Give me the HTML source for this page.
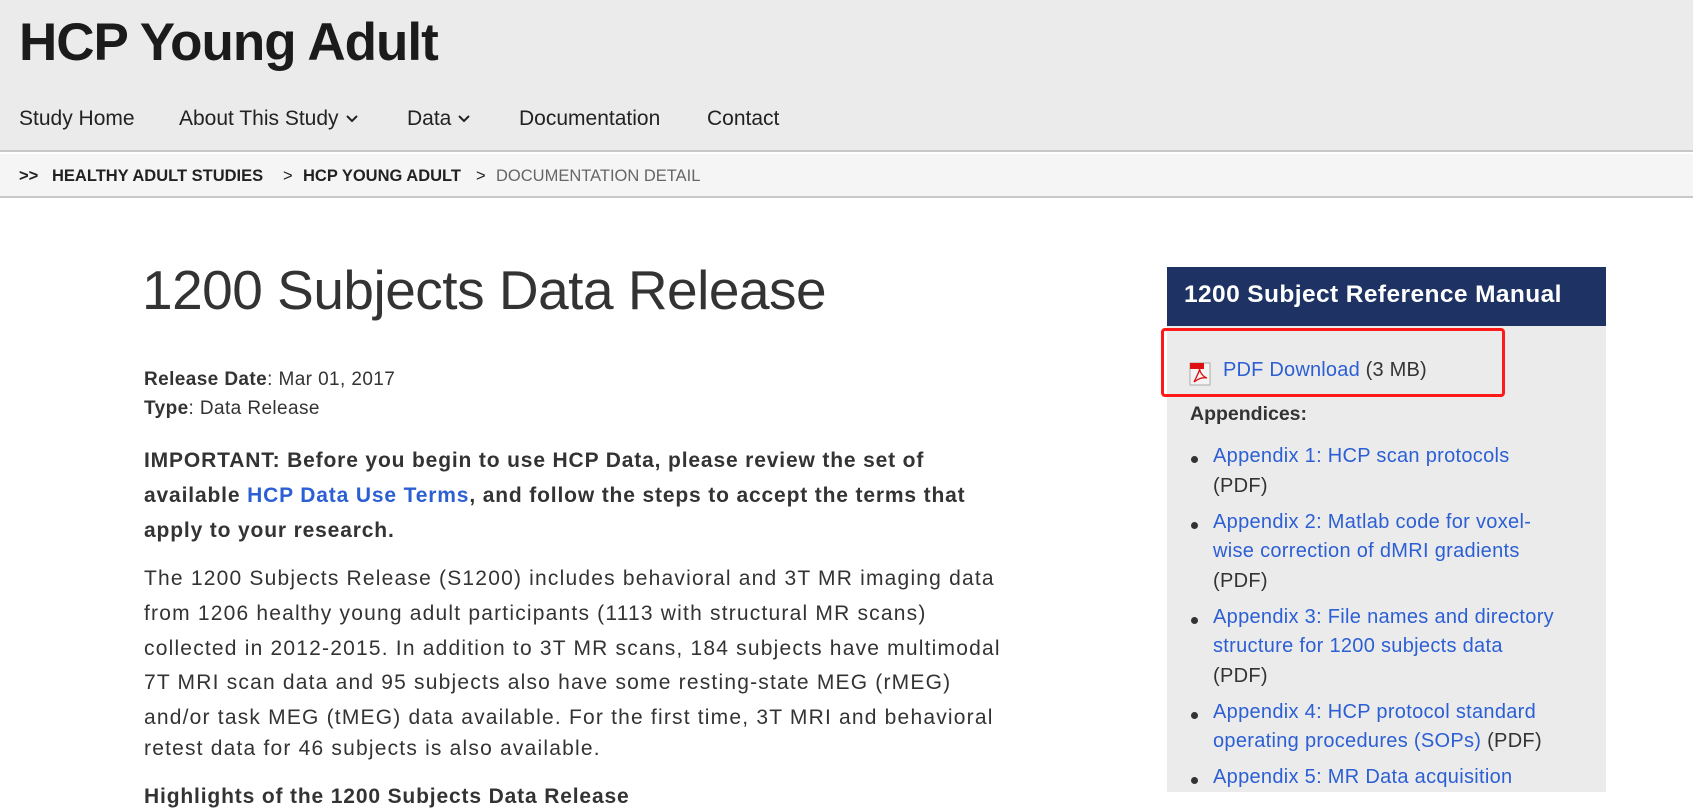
<!DOCTYPE html>
<html><head><meta charset="utf-8"><style>
*{margin:0;padding:0;box-sizing:border-box}
body{width:1693px;height:792px;overflow:hidden;background:#fff;font-family:"Liberation Sans",Arial,sans-serif;color:#333;position:relative}
.a{position:absolute;white-space:nowrap}
a{color:#2c5fd4;text-decoration:none}
.hdr{position:absolute;left:0;top:0;width:1693px;height:152px;background:#ebebeb;border-bottom:2px solid #c8c8c8}
.bc{position:absolute;left:0;top:154px;width:1693px;height:44px;background:#f5f5f5;border-bottom:2px solid #c8c8c8}
.nav{font-size:21px;color:#222}
.crumb{font-size:16.5px;font-weight:bold;color:#222;top:167px}
.p{font-size:21px;color:#333;letter-spacing:1.2px}
.b{font-size:21px;font-weight:bold;letter-spacing:0.85px;color:#333}
.side{position:absolute;left:1167px;top:267px;width:439px;height:525px;background:#ebebeb}
.sh{position:absolute;left:1167px;top:267px;width:439px;height:59px;background:#1e3264}
.li{font-size:20px;letter-spacing:0.3px}
.dot{position:absolute;width:7px;height:7px;border-radius:50%;background:#333}
.chev{display:inline-block;vertical-align:middle;margin-left:6px}
</style></head><body>
<div class="hdr"></div>
<div class="a" style="left:19px;top:12px;font-size:53px;font-weight:bold;color:#1b1b1b;letter-spacing:-1px">HCP Young Adult</div>
<div class="a nav" style="left:19px;top:107px">Study Home</div>
<div class="a nav" style="left:179px;top:107px">About This Study<svg class="chev" width="14" height="10" viewBox="0 0 14 10"><path d="M2 2 L7 7 L12 2" fill="none" stroke="#222" stroke-width="2"/></svg></div>
<div class="a nav" style="left:407px;top:107px">Data<svg class="chev" width="14" height="10" viewBox="0 0 14 10"><path d="M2 2 L7 7 L12 2" fill="none" stroke="#222" stroke-width="2"/></svg></div>
<div class="a nav" style="left:519px;top:107px">Documentation</div>
<div class="a nav" style="left:707px;top:107px">Contact</div>
<div class="bc"></div>
<div class="a crumb" style="left:19px">&gt;&gt;</div>
<div class="a crumb" style="left:52px">HEALTHY ADULT STUDIES</div>
<div class="a crumb" style="left:283px;font-weight:normal">&gt;</div>
<div class="a crumb" style="left:303px">HCP YOUNG ADULT</div>
<div class="a crumb" style="left:476px;font-weight:normal">&gt;</div>
<div class="a crumb" style="left:496px;font-weight:normal;color:#666">DOCUMENTATION DETAIL</div>

<div class="a" style="left:142px;top:258px;font-size:55px;color:#333;font-weight:300;letter-spacing:-0.5px">1200 Subjects Data Release</div>
<div class="a" style="left:144px;top:369px;font-size:19px;letter-spacing:0.4px"><b>Release Date</b>: Mar 01, 2017</div>
<div class="a" style="left:144px;top:398px;font-size:19px;letter-spacing:0.4px"><b>Type</b>: Data Release</div>
<div class="a b" style="left:144px;top:449px">IMPORTANT: Before you begin to use HCP Data, please review the set of</div>
<div class="a b" style="left:144px;top:484px">available <a href="#">HCP Data Use Terms</a>, and follow the steps to accept the terms that</div>
<div class="a b" style="left:144px;top:519px">apply to your research.</div>
<div class="a p" style="left:144px;top:567px">The 1200 Subjects Release (S1200) includes behavioral and 3T MR imaging data</div>
<div class="a p" style="left:144px;top:602px">from 1206 healthy young adult participants (1113 with structural MR scans)</div>
<div class="a p" style="left:144px;top:637px">collected in 2012-2015. In addition to 3T MR scans, 184 subjects have multimodal</div>
<div class="a p" style="left:144px;top:671px">7T MRI scan data and 95 subjects also have some resting-state MEG (rMEG)</div>
<div class="a p" style="left:144px;top:706px">and/or task MEG (tMEG) data available. For the first time, 3T MRI and behavioral</div>
<div class="a p" style="left:144px;top:737px">retest data for 46 subjects is also available.</div>
<div class="a b" style="left:144px;top:785px">Highlights of the 1200 Subjects Data Release</div>

<div class="side"></div>
<div class="sh"></div>
<div class="a" style="left:1184px;top:281px;font-size:24.5px;font-weight:bold;color:#fff;letter-spacing:0.4px">1200 Subject Reference Manual</div>
<div style="position:absolute;left:1161px;top:328px;width:344px;height:69px;border:3px solid #ff1a1a;border-radius:4px"></div>
<svg class="a" style="left:1189px;top:362px" width="22" height="24" viewBox="0 0 22 24"><rect x="1" y="1" width="20" height="22" fill="#f4f4f4" stroke="#aaa"/><rect x="1" y="1" width="14" height="6" fill="#d11"/><path d="M5 20 C9 12 12 6 11 4 C9 6 12 14 18 16 C14 15 9 17 5 20Z" fill="none" stroke="#d11" stroke-width="1.3"/></svg>
<div class="a" style="left:1223px;top:359px;font-size:20px;letter-spacing:0.2px"><a href="#">PDF Download</a> (3 MB)</div>
<div class="a" style="left:1190px;top:403px;font-size:19.5px;font-weight:bold">Appendices:</div>

<div class="dot" style="left:1191px;top:456px"></div>
<div class="a li" style="left:1213px;top:445px"><a href="#">Appendix 1: HCP scan protocols</a></div>
<div class="a li" style="left:1213px;top:475px">(PDF)</div>
<div class="dot" style="left:1191px;top:522px"></div>
<div class="a li" style="left:1213px;top:511px"><a href="#">Appendix 2: Matlab code for voxel-</a></div>
<div class="a li" style="left:1213px;top:540px"><a href="#">wise correction of dMRI gradients</a></div>
<div class="a li" style="left:1213px;top:570px">(PDF)</div>
<div class="dot" style="left:1191px;top:617px"></div>
<div class="a li" style="left:1213px;top:606px"><a href="#">Appendix 3: File names and directory</a></div>
<div class="a li" style="left:1213px;top:635px"><a href="#">structure for 1200 subjects data</a></div>
<div class="a li" style="left:1213px;top:665px">(PDF)</div>
<div class="dot" style="left:1191px;top:712px"></div>
<div class="a li" style="left:1213px;top:701px"><a href="#">Appendix 4: HCP protocol standard</a></div>
<div class="a li" style="left:1213px;top:730px"><a href="#">operating procedures (SOPs)</a> (PDF)</div>
<div class="dot" style="left:1191px;top:777px"></div>
<div class="a li" style="left:1213px;top:766px"><a href="#">Appendix 5: MR Data acquisition</a></div>
</body></html>
